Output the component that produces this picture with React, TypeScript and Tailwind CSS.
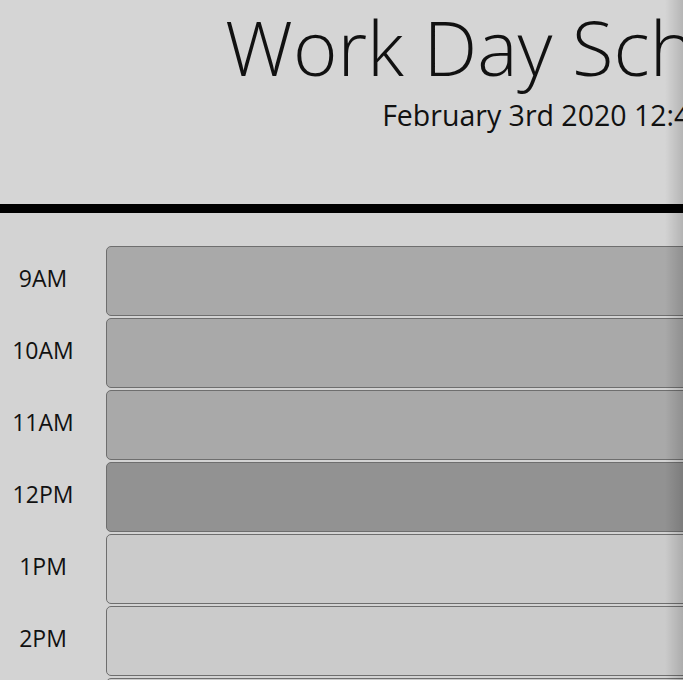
const hours = [
  { label: "9AM", state: "past" },
  { label: "10AM", state: "past" },
  { label: "11AM", state: "past" },
  { label: "12PM", state: "present" },
  { label: "1PM", state: "future" },
  { label: "2PM", state: "future" },
  { label: "3PM", state: "future" },
];

const blockColor: Record<string, string> = {
  past: "bg-[#a9a9a9]",
  present: "bg-[#929292]",
  future: "bg-[#cbcbcb]",
};

const App = () => {
  return (
    <div className="relative w-full h-[680px] overflow-hidden bg-[#d3d3d3] text-[#111] font-['Open_Sans',sans-serif]">
      <div className="w-[1140px]">
        <header className="h-[213px] border-b-[9px] border-black bg-[#d5d5d5] text-center">
          <h1 className="pt-[4px] text-[76px] leading-[86px] font-light">Work Day Scheduler</h1>
          <p className="mt-[5px] text-[28.5px] leading-[40px]">February 3rd 2020 12:45 pm</p>
        </header>

        <div className="pt-[33px] flex flex-col gap-[2px]">
          {hours.map((hour) => (
            <div key={hour.label} className="flex h-[70px]">
              <div className="w-[86px] pb-[6px] flex items-center justify-center text-[23px]">{hour.label}</div>
              <textarea
                className={`ml-[20px] flex-1 resize-none rounded-l-[5px] border border-[#6e6e6e] ${blockColor[hour.state]}`}
              />
            </div>
          ))}
        </div>
      </div>
      <div className="pointer-events-none absolute right-0 top-0 h-full w-[18px] bg-gradient-to-l from-black/15 to-transparent" />
    </div>
  );
};

export default App;
